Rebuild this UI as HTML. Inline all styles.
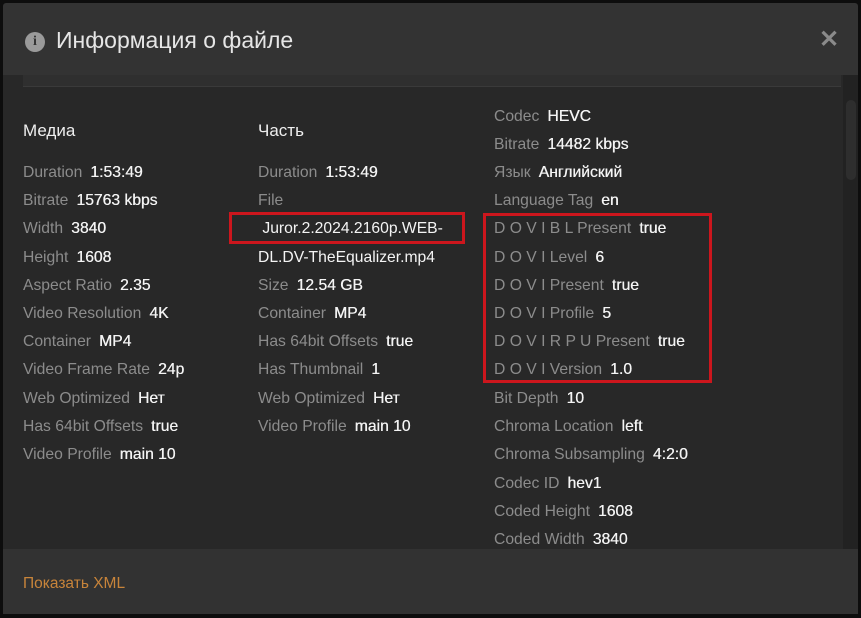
<!DOCTYPE html>
<html><head><meta charset="utf-8"><style>
*{margin:0;padding:0;box-sizing:border-box}
body{width:861px;height:618px;background:#0d0d0d;font-family:"Liberation Sans",sans-serif;overflow:hidden;position:relative}
.hdr{position:absolute;left:3px;top:3px;width:855px;height:72px;background:#333;border-radius:3px 3px 0 0}
.hdr .t{position:absolute;left:53px;top:24px;font-size:23px;color:#e6e6e6}
.ic{position:absolute;left:22px;top:29px;width:20px;height:20px;border-radius:50%;background:#9a9a9a;color:#333;font:bold 14px/20px "Liberation Serif",serif;text-align:center}
.x{position:absolute;left:816px;top:22px;font-size:24px;color:#8a8a8a;font-weight:bold}
.body{position:absolute;left:3px;top:75px;width:855px;height:474px;background:#282828;overflow:hidden}
.bar{position:absolute;left:20px;top:0;width:818px;height:12px;background:#2f2f2f;border-bottom:1px solid #3a3a3a}
.track{position:absolute;left:840px;top:0;width:15px;height:474px;background:#222}
.thumb{position:absolute;left:843px;top:25px;width:10px;height:80px;background:#2e2e2e;border-radius:5px}
.r{position:absolute;font-size:15.7px;line-height:28px;white-space:nowrap;color:#8c8c8c}
.r b{font-weight:normal;color:#f4f4f4;margin-left:8px;text-shadow:0.3px 0 0 #f4f4f4}
.h{position:absolute;font-size:17px;color:#eee;line-height:28px}
.box{position:absolute;border:3px solid #cc161d}
.ftr{position:absolute;left:3px;top:549px;width:855px;height:65px;background:#323232}
.ftr span{position:absolute;left:20px;top:26px;font-size:15.5px;color:#c8843a}
</style></head><body>
<div class="hdr"><div class="ic">i</div><div class="t">Информация о файле</div><div class="x">✕</div></div>
<div class="body">
<div class="bar"></div><div class="track"></div><div class="thumb"></div>
</div>
<div style="position:absolute;left:0;top:2px">
<div class="h" style="left:23px;top:115px">Медиа</div>
<div class="h" style="left:258px;top:115px">Часть</div>
<div class="r" style="left:23px;top:157px">Duration<b>1:53:49</b></div>
<div class="r" style="left:23px;top:185px">Bitrate<b>15763 kbps</b></div>
<div class="r" style="left:23px;top:213px">Width<b>3840</b></div>
<div class="r" style="left:23px;top:242px">Height<b>1608</b></div>
<div class="r" style="left:23px;top:270px">Aspect Ratio<b>2.35</b></div>
<div class="r" style="left:23px;top:298px">Video Resolution<b>4K</b></div>
<div class="r" style="left:23px;top:326px">Container<b>MP4</b></div>
<div class="r" style="left:23px;top:354px">Video Frame Rate<b>24p</b></div>
<div class="r" style="left:23px;top:383px">Web Optimized<b>Нет</b></div>
<div class="r" style="left:23px;top:411px">Has 64bit Offsets<b>true</b></div>
<div class="r" style="left:23px;top:439px">Video Profile<b>main 10</b></div>

<div class="r" style="left:258px;top:157px">Duration<b>1:53:49</b></div>
<div class="r" style="left:258px;top:185px">File</div>
<div class="r" style="left:258px;top:213px;color:#f4f4f4">&nbsp;Juror.2.2024.2160p.WEB-</div>
<div class="r" style="left:258px;top:242px;color:#f4f4f4">DL.DV-TheEqualizer.mp4</div>
<div class="r" style="left:258px;top:270px">Size<b>12.54 GB</b></div>
<div class="r" style="left:258px;top:298px">Container<b>MP4</b></div>
<div class="r" style="left:258px;top:326px">Has 64bit Offsets<b>true</b></div>
<div class="r" style="left:258px;top:354px">Has Thumbnail<b>1</b></div>
<div class="r" style="left:258px;top:383px">Web Optimized<b>Нет</b></div>
<div class="r" style="left:258px;top:411px">Video Profile<b>main 10</b></div>

<div class="r" style="left:494px;top:101px">Codec<b>HEVC</b></div>
<div class="r" style="left:494px;top:129px">Bitrate<b>14482 kbps</b></div>
<div class="r" style="left:494px;top:157px">Язык<b>Английский</b></div>
<div class="r" style="left:494px;top:185px">Language Tag<b>en</b></div>
<div class="r" style="left:494px;top:213px">D O V I B L Present<b>true</b></div>
<div class="r" style="left:494px;top:242px">D O V I Level<b>6</b></div>
<div class="r" style="left:494px;top:270px">D O V I Present<b>true</b></div>
<div class="r" style="left:494px;top:298px">D O V I Profile<b>5</b></div>
<div class="r" style="left:494px;top:326px">D O V I R P U Present<b>true</b></div>
<div class="r" style="left:494px;top:354px">D O V I Version<b>1.0</b></div>
<div class="r" style="left:494px;top:383px">Bit Depth<b>10</b></div>
<div class="r" style="left:494px;top:411px">Chroma Location<b>left</b></div>
<div class="r" style="left:494px;top:439px">Chroma Subsampling<b>4:2:0</b></div>
<div class="r" style="left:494px;top:468px">Codec ID<b>hev1</b></div>
<div class="r" style="left:494px;top:496px">Coded Height<b>1608</b></div>
<div class="r" style="left:494px;top:524px">Coded Width<b>3840</b></div>
</div>
<div class="box" style="left:229px;top:212px;width:236px;height:32px"></div>
<div class="box" style="left:483px;top:213px;width:229px;height:170px"></div>
<div class="ftr"><span>Показать XML</span></div>
</body></html>
